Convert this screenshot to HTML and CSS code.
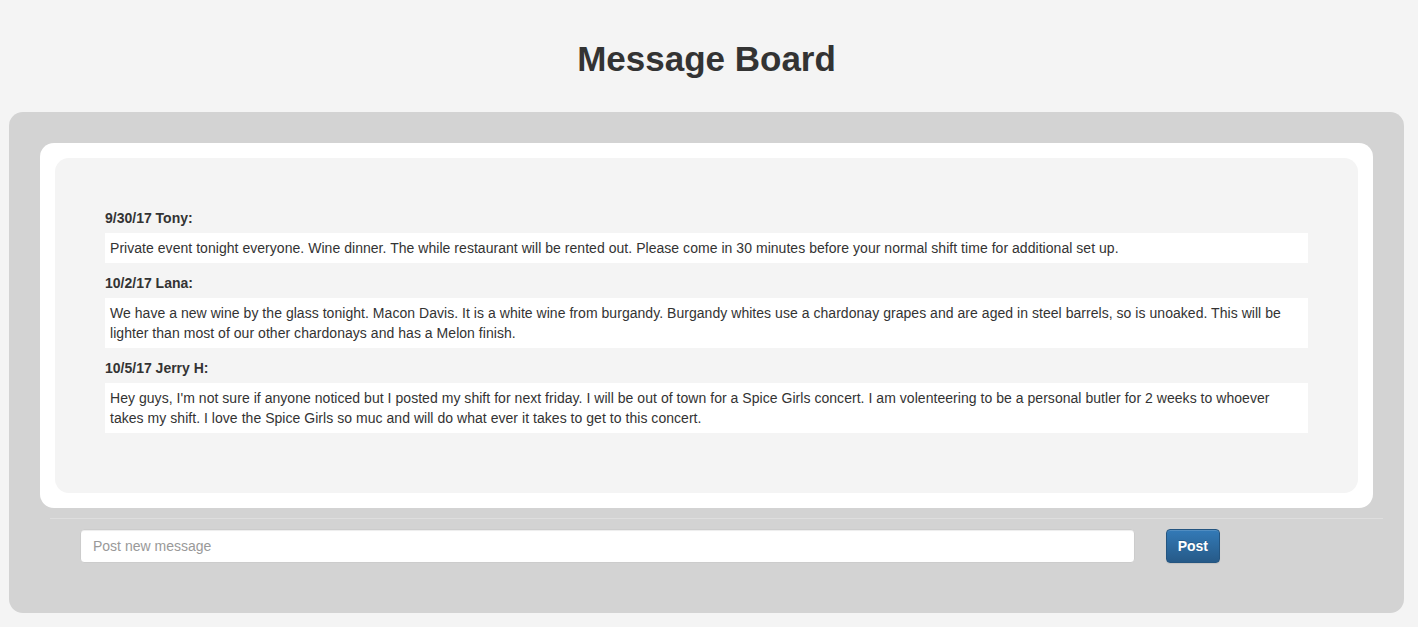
FILE: index.html
```html
<!DOCTYPE html>
<html lang="en">
<head>
<meta charset="utf-8">
<title>Message Board</title>
<link rel="stylesheet" href="styles.css">
</head>
<body>
  <h1 class="title">Message Board</h1>
  <div class="panel">
    <div class="board">
      <div class="feed">
        <div class="message">
          <div class="author">9/30/17 Tony:</div>
          <div class="body">Private event tonight everyone. Wine dinner. The while restaurant will be rented out. Please come in 30 minutes before your normal shift time for additional set up.</div>
        </div>
        <div class="message">
          <div class="author">10/2/17 Lana:</div>
          <div class="body">We have a new wine by the glass tonight. Macon Davis. It is a white wine from burgandy. Burgandy whites use a chardonay grapes and are aged in steel barrels, so is unoaked. This will be lighter than most of our other chardonays and has a Melon finish.</div>
        </div>
        <div class="message">
          <div class="author">10/5/17 Jerry H:</div>
          <div class="body">Hey guys, I'm not sure if anyone noticed but I posted my shift for next friday. I will be out of town for a Spice Girls concert. I am volenteering to be a personal butler for 2 weeks to whoever takes my shift. I love the Spice Girls so muc and will do what ever it takes to get to this concert.</div>
        </div>
      </div>
    </div>
    <hr class="divider">
    <form class="composer">
      <input class="field" type="text" placeholder="Post new message">
      <button class="btn" type="button">Post</button>
    </form>
  </div>
</body>
</html>
```
FILE: styles.css
```css
html, body {
  margin: 0;
  padding: 0;
}
body {
  background: #f4f4f4;
  color: #333;
  font-family: "Liberation Sans", Arial, Helvetica, sans-serif;
  font-size: 14px;
  line-height: 20px;
}
.title {
  margin: 0;
  padding: 39px 5px 0 0;
  font-size: 35px;
  line-height: 39.6px;
  font-weight: bold;
  text-align: center;
  color: #333;
}
.panel {
  margin: 33px 14px 14px 9px;
  background: #d3d3d3;
  border-radius: 14px;
  padding: 31px 31px 50px;
}
.board {
  background: #fff;
  border-radius: 14px;
  padding: 15px;
}
.feed {
  background: #f4f4f4;
  border-radius: 14px;
  padding: 50px 50px 60px;
}
.message + .message {
  margin-top: 10px;
}
.author {
  font-weight: bold;
  margin-bottom: 5px;
}
.body {
  background: #fff;
  padding: 5px;
  letter-spacing: 0.04px;
}
.divider {
  border: 0;
  border-top: 1px solid #dedede;
  margin: 10px -10px 10px 10px;
  height: 0;
}
.composer {
  display: flex;
  align-items: center;
  gap: 31px;
  margin: 0;
  padding: 0 153px 0 40px;
}
.field {
  flex: 1;
  box-sizing: border-box;
  height: 34px;
  padding: 6px 12px;
  border: 1px solid #ccc;
  border-radius: 4px;
  background: #fff;
  font-family: inherit;
  font-size: 14px;
  color: #555;
  box-shadow: inset 0 1px 1px rgba(0,0,0,0.075);
}
.field::placeholder {
  color: #999;
}
.btn {
  box-sizing: border-box;
  height: 34px;
  padding: 6px 11px;
  border: 1px solid #245580;
  border-radius: 4px;
  background: linear-gradient(to bottom, #337ab7 0%, #265a88 100%);
  color: #fff;
  font-family: inherit;
  font-size: 14px;
  font-weight: bold;
  text-shadow: 0 -1px 0 rgba(0,0,0,0.2);
  box-shadow: inset 0 1px 0 rgba(255,255,255,0.15), 0 1px 1px rgba(0,0,0,0.075);
}
```
